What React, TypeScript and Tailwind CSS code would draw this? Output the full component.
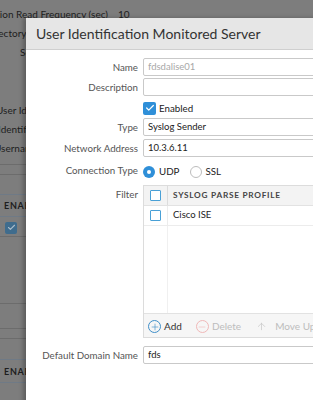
import { Plus, Minus, ArrowUp, Check } from "lucide-react"

const font = { fontFamily: "Lato, 'Open Sans', sans-serif" }

function BgLine({ className = "" }: { className?: string }) {
    return <div className={`h-px bg-[#6c6c6c] ${className}`} />
}

function Background() {
    return (
        <div className="flex flex-col text-[10px] text-[#1e1e1e] leading-none">
            <div className="h-[7px]" />
            <div className="flex items-center h-[14px] whitespace-nowrap">
                <div className="w-[108px] shrink-0 flex justify-end">
                    <span className="whitespace-nowrap">Session Read Frequency (sec)</span>
                </div>
                <span className="ml-[10px]">10</span>
            </div>
            <div className="h-[5px]" />
            <div className="flex items-center h-[14px] whitespace-nowrap">
                <span className="-ml-[15px]">Directory</span>
            </div>
            <div className="h-[5px]" />
            <div className="flex items-center h-[14px] whitespace-nowrap">
                <span className="ml-[20px]">Server</span>
            </div>
            <div className="h-[44px]" />
            <div className="flex items-center h-[14px] whitespace-nowrap">
                <span className="-ml-[4px]">User Identification</span>
            </div>
            <div className="h-[5px]" />
            <div className="flex items-center h-[14px] whitespace-nowrap">
                <span className="-ml-[2px]">Identification</span>
            </div>
            <div className="h-[5px]" />
            <div className="flex items-center h-[14px] whitespace-nowrap">
                <span className="-ml-[6px]">Username</span>
            </div>
            <div className="h-[9px]" />
            <BgLine />
            <div className="h-[9px]" />
            <BgLine />
            <div className="h-[19px]" />
            <div className="h-px bg-[#6f7a86]" />
            <div className="flex items-center h-[21px] pl-[4px] font-bold text-[9px] tracking-[0.08em] whitespace-nowrap">ENABLED</div>
            <div className="h-px bg-[#6f7a86]" />
            <div className="h-[5px]" />
            <div className="flex items-center h-[11px] pl-[5px]">
                <div className="w-[12px] h-[12px] rounded-[2px] bg-[#3f6c8d] flex items-center justify-center">
                    <Check className="w-[9px] h-[9px] text-[#a9bccb]" strokeWidth={3} />
                </div>
            </div>
            <div className="h-[3px]" />
            <BgLine />
            <div className="h-[66px]" />
            <BgLine />
            <div className="h-[24px]" />
            <BgLine />
            <div className="h-[9px]" />
            <BgLine />
            <div className="h-[20px]" />
            <div className="h-px bg-[#6f7a86]" />
            <div className="flex items-center h-[22px] pl-[4px] font-bold text-[9px] tracking-[0.08em] whitespace-nowrap">ENABLED</div>
            <div className="h-px bg-[#6f7a86]" />
        </div>
    )
}

function Row({ label, children, className = "" }: { label: string; children?: React.ReactNode; className?: string }) {
    return (
        <div className={`flex items-center h-[18px] ${className}`}>
            <div className="w-[112px] shrink-0 text-right text-[9.75px] text-[#555] whitespace-nowrap">{label}</div>
            <div className="flex-1 flex items-center ml-[5px]">{children}</div>
        </div>
    )
}

function TextBox({ value, muted = false }: { value: string; muted?: boolean }) {
    return (
        <div className={`w-full h-[18px] border border-[#c9c9c9] rounded-[2px] bg-white flex items-center pl-[4px] text-[9.5px] ${muted ? "text-[#a8a8a8]" : "text-[#222]"}`}>
            {value}
        </div>
    )
}

function Box() {
    return <div className="w-[11px] h-[11px] border-[1.5px] border-[#49a0d6] rounded-[1px] bg-white" />
}

function Modal() {
    return (
        <div className="absolute left-[26px] top-[18px] w-[320px] h-[400px] bg-white shadow-[-3px_0_4px_rgba(0,0,0,0.25)]">
            <div className="h-[32px] bg-[#e6e6e6] border-b border-[#cfcfcf] flex items-center pl-[10px] text-[14px] text-[#333] whitespace-nowrap">
                User Identification Monitored Server
            </div>
            <div className="flex flex-col gap-[2px] pt-[8px]">
                <Row label="Name"><TextBox value="fdsdalise01" muted /></Row>
                <Row label="Description"><TextBox value="" /></Row>
                <Row label="" className="mt-[1px]">
                    <div className="flex items-center gap-[2px] text-[9.75px] text-[#222]">
                        <div className="w-[13px] h-[13px] rounded-[2px] bg-[#2f8fd8] flex items-center justify-center">
                            <Check className="w-[10px] h-[10px] text-white" strokeWidth={3} />
                        </div>
                        <span className="ml-[1px]">Enabled</span>
                    </div>
                </Row>
                <Row label="Type" className="-mt-[1px]"><TextBox value="Syslog Sender" /></Row>
                <Row label="Network Address" className="mt-[1px]"><TextBox value="10.3.6.11" /></Row>
                <Row label="Connection Type" className="mt-[2px]">
                    <div className="flex items-center text-[9.75px] text-[#222] pt-[3px]">
                        <div className="w-[12px] h-[12px] rounded-full bg-[#2f8fd8] flex items-center justify-center">
                            <div className="w-[4px] h-[4px] rounded-full bg-white" />
                        </div>
                        <span className="ml-[4px]">UDP</span>
                        <div className="ml-[11px] w-[12px] h-[12px] rounded-full border border-[#bdbdbd] bg-white" />
                        <span className="ml-[3px]">SSL</span>
                    </div>
                </Row>
                <div className="flex mt-[4px]">
                    <div className="w-[112px] shrink-0 text-right text-[9.75px] text-[#555] pt-[2px]">Filter</div>
                    <div className="flex-1 ml-[5px] border border-[#dcdcdc] flex flex-col h-[153px]">
                        <div className="flex h-[20px] bg-[#f3f3f3] border-b border-[#e2e2e2]">
                            <div className="w-[24px] flex items-center justify-center border-r border-[#dcdcdc]"><Box /></div>
                            <div className="flex items-center pl-[5px] text-[8.25px] font-bold tracking-[0.09em] text-[#444] whitespace-nowrap">SYSLOG PARSE PROFILE</div>
                        </div>
                        <div className="flex h-[20px] border-b border-[#ececec]">
                            <div className="w-[24px] flex items-center justify-center border-r border-[#ececec]"><Box /></div>
                            <div className="flex items-center pl-[5px] text-[9.5px] text-[#222]">Cisco ISE</div>
                        </div>
                        <div className="flex-1 flex">
                            <div className="w-[24px] border-r border-[#f0f0f0]" />
                        </div>
                        <div className="h-[24px] bg-[#f6f6f6] border-t border-[#e2e2e2] flex items-center pl-[4px] pt-[2px] text-[10px] whitespace-nowrap">
                            <div className="w-[13px] h-[13px] rounded-full border border-[#3f8fc9] flex items-center justify-center">
                                <Plus className="w-[10px] h-[10px] text-[#3f8fc9]" strokeWidth={1.5} />
                            </div>
                            <span className="ml-[3px] text-[#333]">Add</span>
                            <div className="ml-[14px] w-[13px] h-[13px] rounded-full border border-[#f0b8b8] flex items-center justify-center">
                                <Minus className="w-[10px] h-[10px] text-[#f0b8b8]" strokeWidth={1.5} />
                            </div>
                            <span className="ml-[3px] text-[#bdbdbd]">Delete</span>
                            <ArrowUp className="ml-[15px] w-[11px] h-[11px] text-[#c4c4c4]" strokeWidth={1.5} />
                            <span className="ml-[8px] text-[#bdbdbd]">Move Up</span>
                        </div>
                    </div>
                </div>
                <Row label="Default Domain Name" className="mt-[6px]"><TextBox value="fds" /></Row>
            </div>
        </div>
    )
}

export default function App() {
    return (
        <div className="relative w-[313px] h-[400px] overflow-hidden bg-[#7d7d7d]" style={font}>
            <Background />
            <Modal />
        </div>
    )
}
